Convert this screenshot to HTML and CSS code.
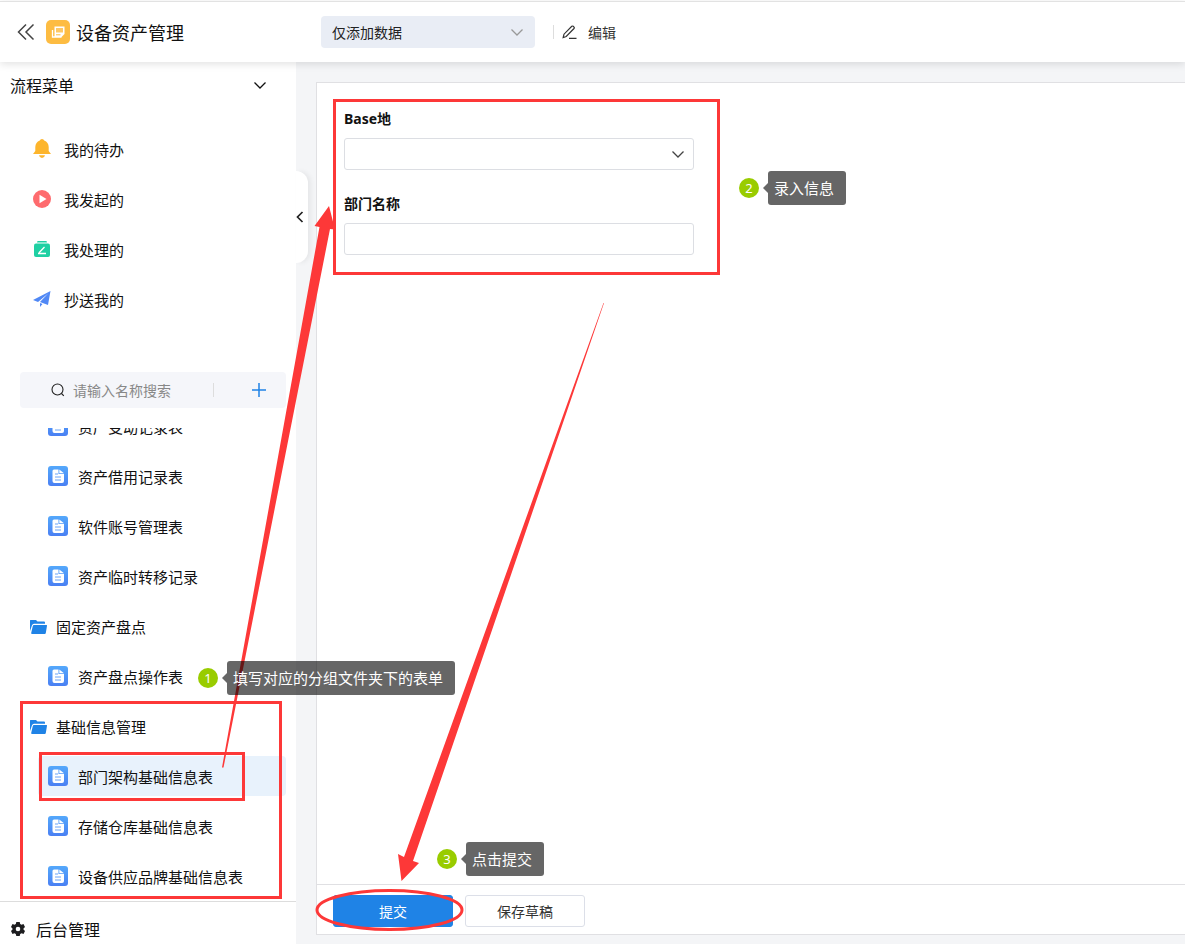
FILE: index.html
```html
<!DOCTYPE html>
<html lang="zh-CN">
<head>
    <meta charset="UTF-8">
    <meta name="viewport" content="width=device-width, initial-scale=1.0">
    <title>设备资产管理</title>
    <link rel="stylesheet" href="styles.css">
</head>
<body>
    <!-- 公共图标 -->
    <svg class="symbols" aria-hidden="true">
        <defs>
            <linearGradient id="docBlue" x1="0" y1="0" x2="0" y2="1">
                <stop offset="0" stop-color="#54a8fb"/>
                <stop offset="1" stop-color="#4a80f3"/>
            </linearGradient>
        </defs>
        <symbol id="icon-doc" viewBox="0 0 20 20">
            <rect width="20" height="20" rx="3" fill="url(#docBlue)"/>
            <path d="M6 3.500h4.500V8H16v7a2 2 0 0 1-2 2H6.500a2 2 0 0 1-2-2V5a1.500 1.500 0 0 1 1.500-1.500z" fill="#fff"/>
            <path d="M11.300 3.500L16 7.300h-4.700z" fill="#fff"/>
            <path d="M7 8h3M7 11h6M7 14h6" stroke="#6ba4f8" stroke-width="1"/>
        </symbol>
        <symbol id="icon-folder" viewBox="0 0 18 16">
            <path d="M0 2.500Q0 2 .5 2H6l1.500 1.500H14q1 0 1 1v1.300H4Q2.500 5.800 2 7.300L0 13z" fill="#1f83e6"/>
            <path d="M4 7h12.500q.7 0 .5.800L15.800 15q-.2 1-1 1H2q-1 0-.8-1L2.800 8q.2-1 1.200-1z" fill="#1f83e6"/>
        </symbol>
        <symbol id="icon-down" viewBox="0 0 14 14">
            <path d="M1.500 4.500L7 10l5.500-5.500" fill="none" stroke="currentColor" stroke-width="1.300"/>
        </symbol>
    </svg>

    <header class="header">
        <div class="header-left">
            <button class="icon-btn" type="button" aria-label="返回">
                <svg width="18" height="18" viewBox="0 0 18 18" fill="none" stroke="#444" stroke-width="1.500"><path d="M9 1.500L1.500 9 9 16.500M16.500 1.500L9 9l7.500 7.500"/></svg>
            </button>
            <svg class="app-logo" width="24" height="24" viewBox="0 0 24 24">
                <rect width="24" height="24" rx="5" fill="#fdbc42"/>
                <path d="M8.500 6.500h10v7.500l-3 3h-7z" fill="#fff"/>
                <path d="M10 8h7v4.500h-7z" fill="#fdc865"/>
                <path d="M10 14.800h4.500" stroke="#fdbc42" stroke-width="1"/>
                <path d="M6.500 10v7h9" fill="none" stroke="#fff" stroke-width="1.300"/>
            </svg>
            <h1 class="app-name">设备资产管理</h1>
        </div>
        <div class="header-tools">
            <div class="select-wrap mode">
                <select class="mode-select" aria-label="数据权限">
                    <option>仅添加数据</option>
                </select>
                <svg class="select-arrow" width="14" height="14"><use href="#icon-down"/></svg>
            </div>
            <button class="edit-btn" type="button">
                <svg width="15" height="14" viewBox="0 0 15 14" fill="none" stroke="#333" stroke-width="1.200"><path d="M1.200 12.500L2 9.200 9.800 1.300q.7-.6 1.400 0l.8.800q.6.700 0 1.400L4.200 11.500zM7 13.300h7.500"/></svg>
                编辑
            </button>
        </div>
    </header>

    <div class="main">
        <aside class="sidebar">
            <button class="menu-title" type="button">
                流程菜单
                <svg width="14" height="14"><use href="#icon-down"/></svg>
            </button>
            <nav class="flow-menu">
                <a href="#">
                    <svg width="18" height="20" viewBox="0 0 18 20" fill="#fdb52c"><path d="M9 0q1.800 0 2.200 1.500Q15.500 3 15.700 8v4l2.300 3H0l2.300-3V8Q2.500 3 6.800 1.500 7.200 0 9 0zM6 16.300h6Q11.500 19 9 19t-3-2.700z"/></svg>
                    我的待办
                </a>
                <a href="#">
                    <svg width="18" height="18" viewBox="0 0 18 18"><circle cx="9" cy="9" r="9" fill="#fe6b6e"/><path d="M6.500 4.800v8.400l7-4.200z" fill="#fff"/></svg>
                    我发起的
                </a>
                <a href="#">
                    <svg width="18" height="16" viewBox="0 0 18 16"><path d="M4.500 0h9l.5 1.500H4z" fill="#1fd0a3"/><rect x="1" y="2.500" width="16" height="13.500" rx="2" fill="#1fd0a3"/><path d="M11.500 6L6 11.800M5 12.500h8" fill="none" stroke="#fff" stroke-width="1.300"/></svg>
                    我处理的
                </a>
                <a href="#">
                    <svg width="18" height="16" viewBox="0 0 18 16" fill="#5088f5"><path d="M17.500 0L0 9l5 2L14.500 3zM17.500 0L7 11l8 3zM7 12v4l2.500-3z"/></svg>
                    抄送我的
                </a>
            </nav>
            <div class="search">
                <svg width="14" height="14" viewBox="0 0 14 14" fill="none" stroke="#222" stroke-width="1.100"><circle cx="6.500" cy="6.500" r="5.500"/><path d="M10.500 10.500l2.300 2.300"/></svg>
                <input class="search-input" type="text" placeholder="请输入名称搜索" aria-label="请输入名称搜索">
                <button class="add-btn" type="button" aria-label="新增">
                    <svg width="14" height="14" viewBox="0 0 14 14" stroke="#1f83e6" stroke-width="1.500"><path d="M7 0v14M0 7h14"/></svg>
                </button>
            </div>
            <nav class="form-list">
                <a class="form-item" href="#"><svg><use href="#icon-doc"/></svg>资产变动记录表</a>
                <a class="form-item" href="#"><svg><use href="#icon-doc"/></svg>资产借用记录表</a>
                <a class="form-item" href="#"><svg><use href="#icon-doc"/></svg>软件账号管理表</a>
                <a class="form-item" href="#"><svg><use href="#icon-doc"/></svg>资产临时转移记录</a>
                <a class="folder-item" href="#"><svg><use href="#icon-folder"/></svg>固定资产盘点</a>
                <a class="form-item" href="#"><svg><use href="#icon-doc"/></svg>资产盘点操作表</a>
                <a class="folder-item" href="#"><svg><use href="#icon-folder"/></svg>基础信息管理</a>
                <a class="form-item active" href="#"><svg><use href="#icon-doc"/></svg>部门架构基础信息表</a>
                <a class="form-item" href="#"><svg><use href="#icon-doc"/></svg>存储仓库基础信息表</a>
                <a class="form-item" href="#"><svg><use href="#icon-doc"/></svg>设备供应品牌基础信息表</a>
            </nav>
            <a class="admin-link" href="#">
                <svg width="14" height="14" viewBox="0 0 14 14"><path fill="#1d1d1f" fill-rule="evenodd" d="M5.300 0h3.400l.5 2 1.300.7 2-.6L14 5l-1.500 1.400v1.200L14 9l-1.500 2.900-2-.6-1.300.7-.5 2H5.300l-.5-2-1.300-.7-2 .6L0 9l1.500-1.400V6.400L0 5l1.500-2.900 2 .6L4.800 2zM7 4.700a2.300 2.300 0 1 0 0 4.600 2.300 2.300 0 0 0 0-4.600z"/></svg>
                后台管理
            </a>
            <button class="collapse-btn" type="button" aria-label="收起">
                <svg width="8" height="12" viewBox="0 0 8 12" fill="none" stroke="#222" stroke-width="1.700"><path d="M6.500 1L1.500 6l5 5"/></svg>
            </button>
        </aside>

        <main class="content">
            <form class="panel">
                <div class="panel-body">
                    <label class="field-label" for="base">Base地</label>
                    <div class="select-wrap field">
                        <select class="field-input" id="base"><option></option></select>
                        <svg class="select-arrow" width="14" height="14"><use href="#icon-down"/></svg>
                    </div>
                    <label class="field-label" for="dept">部门名称</label>
                    <input class="field-input field" id="dept" type="text">
                </div>
                <div class="panel-footer">
                    <button class="btn primary" type="button">提交</button>
                    <button class="btn" type="button">保存草稿</button>
                </div>
            </form>
        </main>
    </div>

    <!-- 操作指引标注 -->
    <svg class="marks" width="1185" height="944" viewBox="0 0 1185 944" aria-hidden="true">
        <g fill="none" stroke="#fd3838" stroke-width="3">
            <rect x="334.500" y="100.500" width="384" height="173"/>
            <rect x="21.500" y="702.500" width="259" height="195"/>
            <rect x="40.500" y="753.500" width="203" height="46"/>
            <ellipse cx="389.500" cy="910" rx="72.500" ry="19.500"/>
        </g>
        <g fill="#fd3838">
            <path d="M222 767.500L319.500 227l-5-1L329 206l6 23.500-5-.5L223.500 767.500z"/>
            <path d="M603.500 303L404 857l-6-3 3.500 27L419 863l-6-2L604 303z"/>
        </g>
    </svg>
    <div class="callout callout-form"><span class="num">1</span><span class="tip">填写对应的分组文件夹下的表单</span></div>
    <div class="callout callout-input"><span class="num">2</span><span class="tip">录入信息</span></div>
    <div class="callout callout-submit"><span class="num">3</span><span class="tip">点击提交</span></div>
</body>
</html>
```
FILE: styles.css
```css
* {
    box-sizing: border-box;
}
body {
    margin: 0;
    height: 100vh;
    display: flex;
    flex-direction: column;
    position: relative;
    overflow: hidden;
    font-family: "Noto Sans", "Noto Sans CJK SC", sans-serif;
    font-size: 14px;
    color: #111;
    background: #fff;
}
button, input, select {
    font: inherit;
    color: inherit;
}
button {
    border: none;
    padding: 0;
    background: none;
    cursor: pointer;
}
a {
    color: inherit;
    text-decoration: none;
}
svg {
    display: block;
    flex-shrink: 0;
}
.symbols {
    position: absolute;
    width: 0;
    height: 0;
}

/* 顶部 */
.header {
    height: 61px;
    flex-shrink: 0;
    display: flex;
    margin-top: 1px;
    border-top: 1px solid #e2e2e2;
    background: #fff;
    box-shadow: 0 2px 8px rgba(0,0,0,0.12);
    z-index: 2;
}
.header-left {
    width: 321px;
    display: flex;
    align-items: center;
    padding-left: 17px;
}
.app-logo {
    margin: 0 6px 0 11px;
}
.app-name {
    margin: 0;
    font-size: 18px;
    font-weight: normal;
}
.header-tools {
    display: flex;
    align-items: center;
}
.select-wrap {
    position: relative;
}
.select-arrow {
    position: absolute;
    right: 9px;
    top: 9px;
    color: #444;
    pointer-events: none;
}
select {
    appearance: none;
}
.mode {
    width: 214px;
}
.mode-select {
    display: block;
    width: 100%;
    height: 32px;
    padding: 0 11px;
    border: none;
    border-radius: 4px;
    background: #e9edf5;
    color: #222;
}
.mode .select-arrow {
    right: 11px;
    color: #999;
}
.edit-btn {
    display: flex;
    align-items: center;
    gap: 11px;
    height: 14px;
    margin-left: 18px;
    padding-left: 8px;
    border-left: 1px solid #ddd;
    color: #333;
}

/* 左侧栏 */
.main {
    flex: 1;
    min-height: 0;
    display: flex;
}
.sidebar {
    position: relative;
    width: 296px;
    flex-shrink: 0;
    display: flex;
    flex-direction: column;
    background: #fff;
}
.menu-title {
    display: flex;
    justify-content: space-between;
    align-items: center;
    height: 46px;
    padding: 0 29px 0 10px;
    font-size: 16px;
}
.flow-menu {
    padding-top: 16px;
}
.flow-menu a {
    display: flex;
    align-items: center;
    gap: 13px;
    height: 50px;
    padding-left: 33px;
    font-size: 15px;
}
.search {
    display: flex;
    align-items: center;
    height: 36px;
    margin: 48px 10px 20px 20px;
    padding-left: 31px;
    border-radius: 4px;
    background: #f5f6fa;
}
.search-input {
    width: 148px;
    padding: 0;
    margin-left: 8px;
    border: none;
    outline: none;
    background: none;
}
.search-input::placeholder {
    color: #888;
}
.add-btn {
    flex: 1;
    height: 14px;
    margin-left: -8px;
    border-left: 1px solid #ddd;
    display: flex;
    justify-content: center;
    padding-left: 17px;
}
.form-list {
    flex: 1;
    min-height: 0;
    overflow: hidden;
    display: flex;
    flex-direction: column;
    justify-content: flex-end;
    gap: 10px;
    padding: 0 10px 5px 30px;
    font-size: 15px;
}
.form-item, .folder-item {
    flex-shrink: 0;
    display: flex;
    align-items: center;
    gap: 10px;
    height: 40px;
    border-radius: 4px;
}
.form-item {
    margin-left: 8px;
    padding-left: 10px;
}
.form-item svg {
    width: 20px;
    height: 20px;
}
.folder-item {
    gap: 8px;
}
.folder-item svg {
    width: 18px;
    height: 16px;
}
.active {
    background: #e8f2fc;
}
.admin-link {
    display: flex;
    align-items: center;
    gap: 11px;
    height: 43px;
    padding: 12px 0 0 11px;
    border-top: 1px solid #ddd;
    font-size: 16px;
}
.collapse-btn {
    position: absolute;
    left: 100%;
    top: 109px;
    width: 12px;
    height: 92px;
    border-radius: 0 12px 12px 0;
    background: #fff;
    box-shadow: 3px 0 5px rgba(0,0,0,0.06);
}

/* 表单 */
.content {
    flex: 1;
    display: flex;
    padding: 20px 0 9px 20px;
    background: #f4f5f7;
}
.panel {
    flex: 1;
    display: flex;
    flex-direction: column;
    border: 1px solid #e0e0e3;
    border-right: none;
    background: #fff;
}
.panel-body {
    flex: 1;
    padding: 26px 27px;
}
.field-label {
    display: block;
    margin-bottom: 9px;
    font-weight: bold;
    line-height: 20px;
}
.field {
    width: 350px;
    margin-bottom: 24px;
}
.field-input {
    display: block;
    width: 350px;
    height: 32px;
    padding: 0 10px;
    border: 1px solid #dcdee3;
    border-radius: 3px;
    background: #fff;
}
.panel-footer {
    display: flex;
    gap: 12px;
    padding: 10px 16px 7px;
    border-top: 1px solid #e0e0e3;
}
.btn {
    width: 120px;
    height: 32px;
    border: 1px solid #dcdfe8;
    border-radius: 3px;
    background: #fff;
    color: #333;
}
.primary {
    border-color: #1f83e6;
    background: #1f83e6;
    color: #fff;
}

/* 标注 */
.marks {
    position: absolute;
    left: 0;
    top: 0;
    z-index: 3;
    pointer-events: none;
}
.callout {
    position: absolute;
    z-index: 4;
    display: flex;
    align-items: center;
    gap: 9px;
}
.callout-form {
    left: 198px;
    top: 661px;
}
.callout-input {
    left: 739px;
    top: 171px;
}
.callout-submit {
    left: 437px;
    top: 842px;
}
.num {
    width: 20px;
    height: 20px;
    border-radius: 50%;
    background: #9c0;
    color: #fff;
    font-size: 13px;
    line-height: 20px;
    text-align: center;
}
.tip {
    position: relative;
    padding: 0 12px 0 6px;
    border-radius: 3px;
    background: rgba(0,0,0,0.6);
    color: #fff;
    font-size: 15px;
    line-height: 34px;
    white-space: nowrap;
}
.tip::before {
    content: "";
    position: absolute;
    right: 100%;
    top: 12px;
    border: 5px solid transparent;
    border-left: none;
    border-right-color: rgba(0,0,0,0.6);
}
```
